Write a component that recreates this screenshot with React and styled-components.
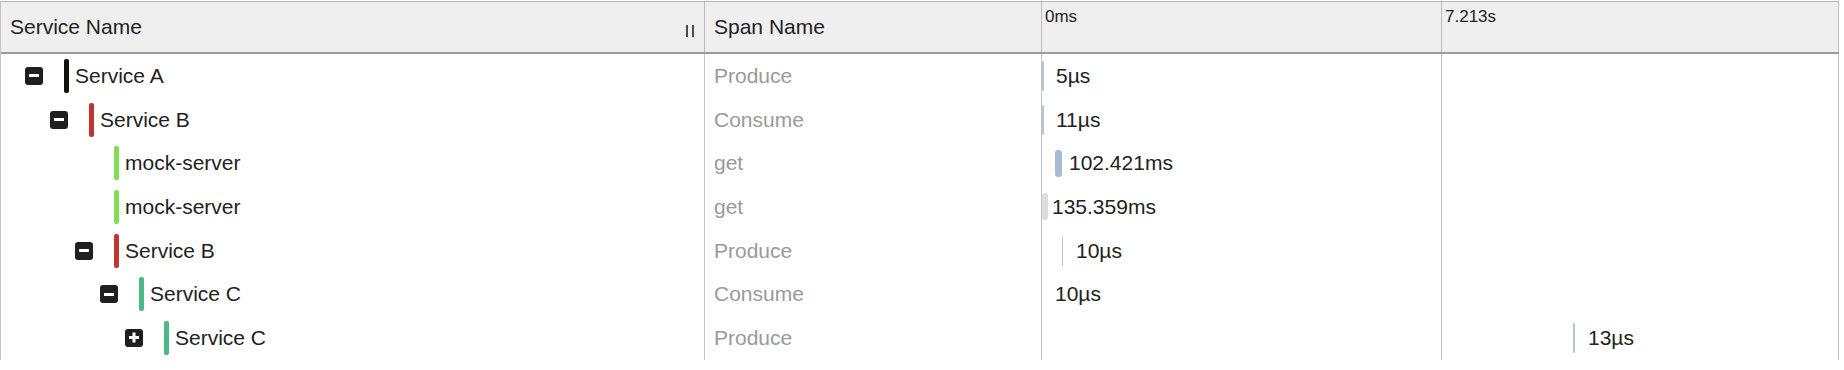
import React from "react";
import styled, { createGlobalStyle } from "styled-components";

const GlobalStyle = createGlobalStyle`
    body {
        margin: 0;
        background: #fff;
        font-family: "Liberation Sans", Arial, sans-serif;
        overflow: hidden;
    }
`

const Table = styled.div`
    width: 1839px;
    margin-top: 1px;
    border-top: 1px solid #b3b3b3;
    border-left: 1px solid #c4c4c4;
    box-sizing: border-box;
`

const HeadRow = styled.div`
    display: grid;
    grid-template-columns: 704px 337px 400px 397px;
    height: 52px;
    background: #efefef;
    border-bottom: 2px solid #9c9c9c;
    box-sizing: border-box;
`

const HeadCell = styled.div`
    display: flex;
    align-items: ${p => (p.$tick ? "flex-start" : "center")};
    justify-content: space-between;
    padding: ${p => (p.$tick ? "5px 3px" : "0 10px 0 9px")};
    border-right: 1px solid #bdbdbd;
    box-sizing: border-box;
    color: #222;
    font-size: ${p => (p.$tick ? "17px" : "21px")};
`

const Grip = styled.span`
    width: 4px;
    height: 12px;
    margin-top: 7px;
    border-left: 2px solid #4a4a4a;
    border-right: 2px solid #4a4a4a;
`

const Row = styled.div`
    display: grid;
    grid-template-columns: 704px 337px 797px;
    height: 43.7px;
`

const NameCell = styled.div`
    display: flex;
    align-items: center;
    padding-left: ${p => 24 + p.$depth * 25}px;
    border-right: 1px solid #c4c4c4;
    box-sizing: border-box;
    font-size: 21px;
    color: #222;
`

const Toggle = styled.span`
    position: relative;
    flex: none;
    width: 18px;
    height: 18px;
    border-radius: 3px;
    background: ${p => (p.$leaf ? "transparent" : "#1f1f1f")};
    margin-right: 21px;

    &::before, &::after {
        content: "";
        position: absolute;
        left: 4px;
        top: 7.5px;
        width: 10px;
        height: 3px;
        background: #fff;
        display: ${p => (p.$leaf ? "none" : "block")};
    }
    &::after {
        display: ${p => (p.$open || p.$leaf ? "none" : "block")};
        transform: rotate(90deg);
    }
`

const ServiceBar = styled.span`
    flex: none;
    width: 5px;
    height: 34px;
    border-radius: 2px;
    background: ${p => p.$color};
    margin-right: 6px;
`

const SpanCell = styled.div`
    display: flex;
    align-items: center;
    padding-left: 9px;
    border-right: 1px solid #c4c4c4;
    box-sizing: border-box;
    font-size: 21px;
    color: #9a9a9a;
`

const TimeCell = styled.div`
    display: flex;
    align-items: center;
    border-right: 1px solid #c4c4c4;
    box-sizing: border-box;
    background: linear-gradient(to right, transparent 399px, #c4c4c4 399px, #c4c4c4 400px, transparent 400px);
`

const TimeBar = styled.span`
    flex: none;
    height: ${p => (p.$thin ? 30 : 27)}px;
    border-radius: 3px;
    background: ${p => p.$color};
`

const Duration = styled.span`
    font-size: 21px;
    color: #222;
`

const spans = [
    { name: "Service A", depth: 0, toggle: "open", color: "#111111", span: "Produce", at: 0, w: 2, bar: "#b4c6da", label: 12, time: "5µs" },
    { name: "Service B", depth: 1, toggle: "open", color: "#c0352d", span: "Consume", at: 0, w: 2, bar: "#b4c6da", label: 12, time: "11µs" },
    { name: "mock-server", depth: 2, toggle: "leaf", color: "#7fde52", span: "get", at: 13, w: 7, bar: "#a5bcd6", label: 7, time: "102.421ms" },
    { name: "mock-server", depth: 2, toggle: "leaf", color: "#7fde52", span: "get", at: 0, w: 6, bar: "#dcdcdc", label: 4, time: "135.359ms" },
    { name: "Service B", depth: 2, toggle: "open", color: "#c0352d", span: "Produce", at: 20, w: 1, bar: "#b9cadd", label: 13, time: "10µs" },
    { name: "Service C", depth: 3, toggle: "open", color: "#4db886", span: "Consume", at: 0, w: 0, bar: "transparent", label: 13, time: "10µs" },
    { name: "Service C", depth: 4, toggle: "closed", color: "#4db886", span: "Produce", at: 531, w: 2, bar: "#b4c6da", label: 13, time: "13µs" },
]

const App = () => {
    return (
        <>
            <GlobalStyle />
            <Table>
                <HeadRow>
                    <HeadCell>
                        <span>Service Name</span>
                        <Grip />
                    </HeadCell>
                    <HeadCell>Span Name</HeadCell>
                    <HeadCell $tick>0ms</HeadCell>
                    <HeadCell $tick>7.213s</HeadCell>
                </HeadRow>
                {spans.map((s, i) => (
                    <Row key={i}>
                        <NameCell $depth={s.depth}>
                            <Toggle $open={s.toggle === "open"} $leaf={s.toggle === "leaf"} />
                            <ServiceBar $color={s.color} />
                            {s.name}
                        </NameCell>
                        <SpanCell>{s.span}</SpanCell>
                        <TimeCell style={{ paddingLeft: s.at }}>
                            <TimeBar $color={s.bar} $thin={s.w < 3} style={{ width: s.w }} />
                            <Duration style={{ marginLeft: s.label }}>{s.time}</Duration>
                        </TimeCell>
                    </Row>
                ))}
            </Table>
        </>
    )
}

export default App;
